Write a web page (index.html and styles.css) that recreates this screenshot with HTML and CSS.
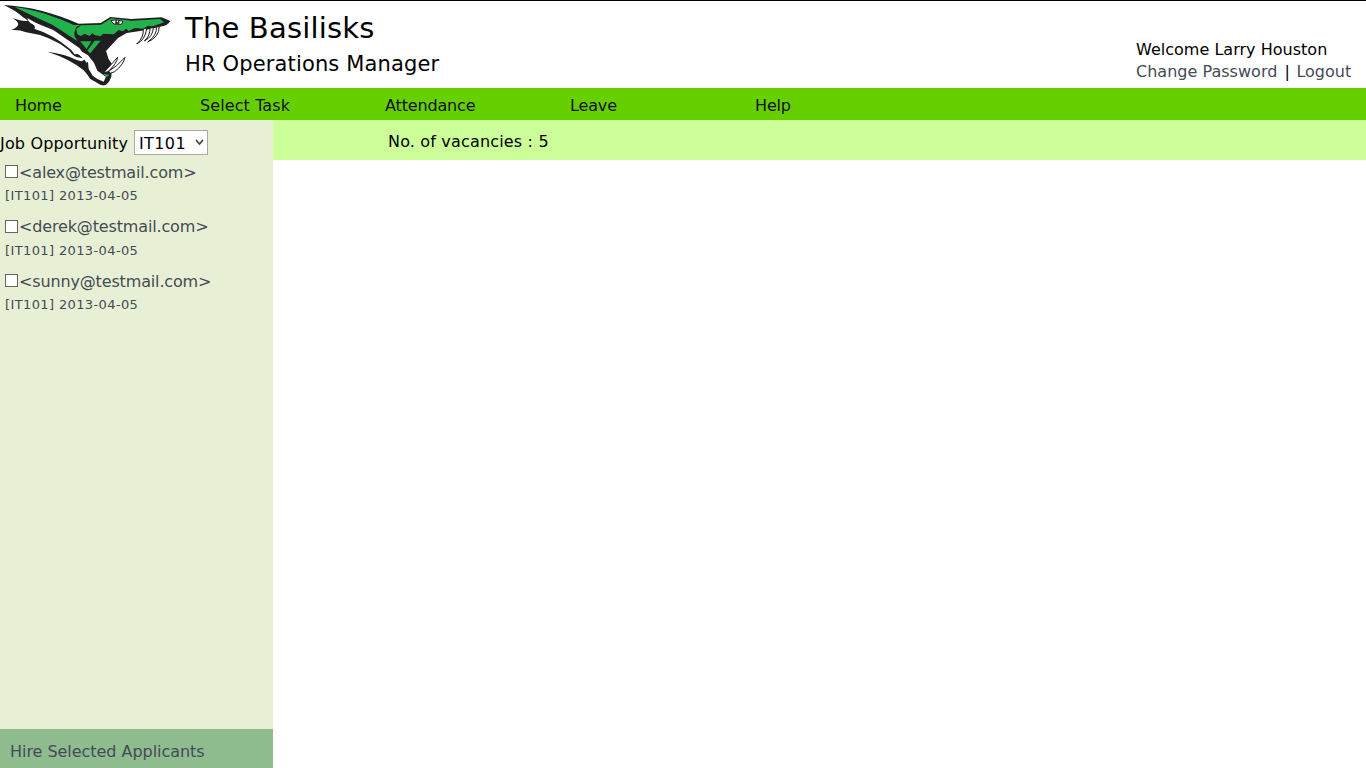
FILE: index.html
```
<!DOCTYPE html>
<html lang="en"><head><meta charset="utf-8"><title>The Basilisks</title><link rel="stylesheet" href="styles.css"></head>
<body>
<header class="header">
<svg class="logo" viewBox="0 3 540 261" aria-label="Basilisk logo">
<path fill="#201e20" d="M12 15C82 18 166 40 236 71L302 69L331 51L394 57L485 52L511 63Q503 78 480 80L425 92L380 99L354 114L318 153L326 178L336 192L334 230Q324 258 307 256L270 236L253 206L266 214L261 181L239 145L160 90L87 61L69 52L51 36Z"/>
<path fill="#fff" d="M62 42L92 60L156 95L218 139L264 166L282 188L292 212L318 230L311 245Q293 239 276 227L264 207L262 188L251 184L241 173L222 164L214 151L155 111L103 91L84 62L78 48Z"/>
<path fill="#201e20" d="M36 26Q69 49 84 62Q68 65 38 54Q54 64 55 73Q53 83 34 90Q62 89 75 96Q154 107 207 151Q217 166 230 171L248 175L239 166L233 162L224 163L213 149Q157 102 104 87Q108 75 91 69L84 61L80 48L64 38Z"/>
<path fill="#201e20" d="M142 155Q197 162 230 180L244 184L254 179L259 188L264 186L266 207L278 227L301 246L315 255L302 255L273 237L251 211Q211 177 142 155Z"/>
<path fill="#21b24b" d="M43 21C111 29 174 54 221 75L242 75L230 80Q221 94 224 109L232 123L157 74L91 44ZM243 76L303 74L334 55L394 62L480 57L492 67L459 79L444 77L430 86L404 84L386 93L379 86L368 94L356 90L341 103L309 101L302 109L283 105L277 99L269 108L254 101L242 108L232 103L229 87ZM240 124L274 124L260 147ZM284 122L302 122L271 160L262 152ZM310 222L329 224L320 231Z"/>
<path fill="#fff" stroke="#201e20" stroke-width="3" d="M332 62Q350 56 369 64L364 73L342 72ZM430 86Q432 113 410 132Q435 121 440 86ZM450 84Q451 107 433 123Q459 110 460 83ZM469 81Q472 106 443 126Q477 112 478 80ZM311 218Q333 194 353 172Q350 192 324 215ZM326 213Q350 201 375 172Q370 195 344 215L330 220Z"/>
<path fill="#201e20" d="M347 59L358 60L358 71L345 71Z"/><path fill="#fff" d="M351 61L355 62L353 67L350 66Z"/>
</svg>
<div class="titles"><div class="brand">The Basilisks</div><div class="role">HR Operations Manager</div></div>
<div class="account"><div class="welcome">Welcome Larry Houston</div><div class="links"><a>Change Password</a><span>|</span><a>Logout</a></div></div>
</header>
<nav class="nav"><a>Home</a><a class="tasks">Select Task</a><a>Attendance</a><a>Leave</a><a>Help</a></nav>
<div class="main"><aside class="sidebar">
<div class="filter"><label>Job Opportunity</label><span class="select">IT101<svg viewBox="0 0 9 7"><path d="M1 1L4.5 5L8 1" fill="none" stroke="#444" stroke-width="1.8"/></svg></span></div>
<div class="person"><div class="mail"><i class="box"></i><a>&lt;alex@testmail.com&gt;</a></div><div class="meta">[IT101] 2013-04-05</div></div>
<div class="person"><div class="mail"><i class="box"></i><a>&lt;derek@testmail.com&gt;</a></div><div class="meta">[IT101] 2013-04-05</div></div>
<div class="person"><div class="mail"><i class="box"></i><a>&lt;sunny@testmail.com&gt;</a></div><div class="meta">[IT101] 2013-04-05</div></div>
<div class="hire">Hire Selected Applicants</div>
</aside><main class="content"><div class="vacancies">No. of vacancies : 5</div></main></div>
</body></html>
```
FILE: styles.css
```
* { box-sizing: border-box; }
body { margin: 0; height: 768px; display: flex; flex-direction: column; overflow: hidden; background: #fff; color: #000; font: 16px/22px Verdana, "DejaVu Sans", sans-serif; letter-spacing: -0.15px; white-space: nowrap; }
a, .mail, .meta, .hire { color: #444b55; }
.header { height: 88px; border-top: 1px solid #000; display: flex; flex: none; }
.logo { width: 180px; height: 87px; flex: none; }
.titles { padding: 8px 0 0 5px; }
.brand { font-size: 29px; line-height: 38px; letter-spacing: 0.18px; }
.role { font-size: 21px; line-height: 34px; letter-spacing: 0.15px; }
.account { margin-left: auto; width: 230px; padding-top: 38px; letter-spacing: 0.02px; }
.links { display: flex; gap: 7px; }
.links span { width: 5px; }
.nav { height: 32px; flex: none; display: flex; background: #66cf00; padding-left: 15px; line-height: 35px; }
.nav a { width: 185px; color: #111; }
.nav .tasks { letter-spacing: 0.1px; }
.main { display: flex; flex: 1; }
.sidebar { width: 273px; background: #e7f0d4; display: flex; flex-direction: column; }
.filter { height: 41px; padding-top: 10px; display: flex; line-height: 26px; }
.filter label { width: 134px; padding-top: 1px; letter-spacing: 0.16px; }
.select { width: 74px; height: 25px; background: #fff; border: 1px solid #aaa; padding: 2px 3px 0 4px; display: flex; align-items: center; justify-content: space-between; letter-spacing: 0.4px; }
.select svg { width: 9px; height: 7px; margin-bottom: 2px; }
.person { height: 54.7px; padding-left: 5px; }
.mail { display: flex; align-items: center; gap: 1px; height: 22px; line-height: 24px; }
.mail a { padding-top: 1px; }
.box { width: 13px; height: 13px; margin-bottom: 1px; border: 1px solid #666; background: #fff; }
.meta { font-size: 13px; line-height: 26px; letter-spacing: 0.38px; }
.hire { height: 39px; margin-top: auto; background: #8fbc8f; padding-left: 10px; line-height: 46px; letter-spacing: -0.04px; }
.content { flex: 1; }
.vacancies { height: 40px; background: #cf9; padding-left: 115px; line-height: 43px; letter-spacing: 0.17px; }
```
